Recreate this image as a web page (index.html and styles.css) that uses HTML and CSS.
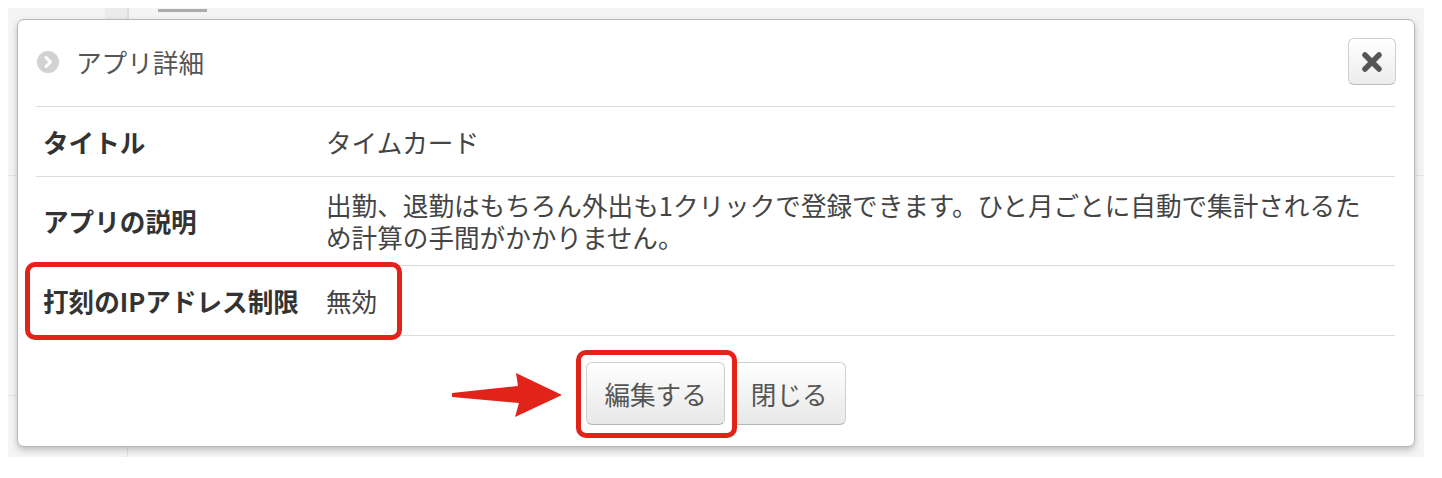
FILE: index.html
```html
<!DOCTYPE html>
<html lang="ja">
<head>
    <meta charset="UTF-8">
    <meta name="viewport" content="width=device-width, initial-scale=1.0">
    <title>アプリ詳細</title>
    <link rel="stylesheet" href="styles.css">
</head>
<body>
    <div class="screen">
        <div class="bg-tab"></div>
        <div class="bg-tab-line"></div>
        <div class="bg-col-line"></div>
        <div class="bg-row-line bg-row-1"></div>
        <div class="bg-row-line bg-row-2"></div>

        <div class="modal">
            <div class="modal-header">
                <span class="header-icon">
                    <svg width="22" height="22" viewBox="0 0 22 22">
                        <circle cx="11" cy="11" r="11" fill="#d2d2d2"/>
                        <path d="M9 6.5 L13.5 11 L9 15.5" fill="none" stroke="#fff" stroke-width="3" stroke-linecap="round" stroke-linejoin="round"/>
                    </svg>
                </span>
                <h3 class="modal-title">アプリ詳細</h3>
                <button class="close-btn" aria-label="閉じる">
                    <svg width="22" height="22" viewBox="0 0 22 22">
                        <path d="M4 4 L18 18 M18 4 L4 18" stroke="#555" stroke-width="5.5" stroke-linecap="round"/>
                    </svg>
                </button>
            </div>

            <div class="detail-row">
                <div class="label">タイトル</div>
                <div class="value">タイムカード</div>
            </div>
            <div class="detail-row">
                <div class="label">アプリの説明</div>
                <div class="value">出勤、退勤はもちろん外出も1クリックで登録できます。ひと月ごとに自動で集計されるため計算の手間がかかりません。</div>
            </div>
            <div class="detail-row marked">
                <div class="label">打刻のIPアドレス制限</div>
                <div class="value">無効</div>
                <div class="mark mark-row"></div>
            </div>

            <div class="modal-footer">
                <svg class="arrow" width="110" height="46" viewBox="0 0 110 46">
                    <polygon points="0,21 66,14 64,1 110,23 63,45 67,31 0,25" fill="#e2231a"/>
                </svg>
                <div class="btn-wrap">
                    <button class="btn">編集する</button>
                    <div class="mark mark-btn"></div>
                </div>
                <button class="btn">閉じる</button>
            </div>
        </div>
    </div>
</body>
</html>
```

FILE: styles.css
```css
body {
    margin: 0;
    background: #fff;
    font-family: "Noto Sans CJK JP", "Noto Sans", sans-serif;
}
.screen {
    position: relative;
    margin: 8px;
    width: 1416px;
    height: 449px;
    padding: 11px 9px 0 9px;
    box-sizing: border-box;
    background: #f4f4f4;
}
.bg-tab {
    position: absolute;
    left: 97px;
    top: 0;
    width: 23px;
    height: 11px;
    background: #ebebeb;
    border-right: 1px solid #dcdcdc;
}
.bg-tab-line {
    position: absolute;
    left: 150px;
    top: 1px;
    width: 49px;
    height: 3px;
    background: #ababab;
}
.bg-col-line {
    position: absolute;
    left: 119px;
    top: 0;
    bottom: 0;
    width: 1px;
    background: #e0e0e0;
}
.bg-row-line {
    position: absolute;
    left: 0;
    right: 0;
    height: 1px;
    background: #e4e4e4;
}
.bg-row-1 { top: 167px; }
.bg-row-2 { top: 387px; }

.modal {
    position: relative;
    width: 1398px;
    height: 428px;
    box-sizing: border-box;
    background: #fff;
    border: 1px solid #b8b8b8;
    border-radius: 7px;
    box-shadow: 0 3px 6px rgba(0, 0, 0, 0.22);
}
.modal-header {
    display: flex;
    align-items: center;
    margin: 0 19px 0 18px;
    padding: 18px 0 21px;
    border-bottom: 1px solid #dcdcdc;
}
.header-icon {
    display: flex;
    margin-left: 1px;
}
.modal-title {
    margin: 0 0 0 17px;
    flex: 1;
    font-size: 25.6px;
    font-weight: normal;
    color: #555;
    line-height: 32px;
}
.close-btn {
    display: flex;
    align-items: center;
    justify-content: center;
    width: 48px;
    height: 47px;
    padding: 0;
    margin-right: -1px;
    border: 1px solid #cfcfcf;
    border-bottom-color: #bdbdbd;
    border-radius: 6px;
    background: linear-gradient(#ffffff, #ececec);
}
.detail-row {
    display: grid;
    grid-template-columns: 290px 1fr;
    align-items: center;
    min-height: 69px;
    margin: 0 19px 0 18px;
    border-bottom: 1px solid #dcdcdc;
    font-size: 25.6px;
    line-height: 32px;
}
.label {
    padding-left: 7px;
    font-weight: bold;
    color: #333;
}
.value {
    padding: 12px 20px 12px 0;
    color: #444;
}
.marked {
    position: relative;
}
.mark {
    position: absolute;
    box-sizing: border-box;
    border: 5px solid #e2231a;
    border-radius: 10px;
}
.mark-row {
    left: -11px;
    top: -4px;
    width: 377px;
    height: 78px;
}
.modal-footer {
    position: relative;
    display: flex;
    justify-content: center;
    gap: 8px;
    padding: 26px 0 21px;
}
.arrow {
    position: absolute;
    left: 434px;
    top: 36px;
}
.btn-wrap {
    position: relative;
}
.mark-btn {
    left: -10px;
    top: -12px;
    width: 161px;
    height: 88px;
}
.btn {
    height: 63px;
    padding: 0 17px;
    font-family: "Noto Sans CJK JP", "Noto Sans", sans-serif;
    font-size: 25.6px;
    color: #555;
    border: 1px solid #cfcfcf;
    border-bottom-color: #b5b5b5;
    border-radius: 6px;
    background: linear-gradient(#ffffff, #e8e8e8);
}
```
